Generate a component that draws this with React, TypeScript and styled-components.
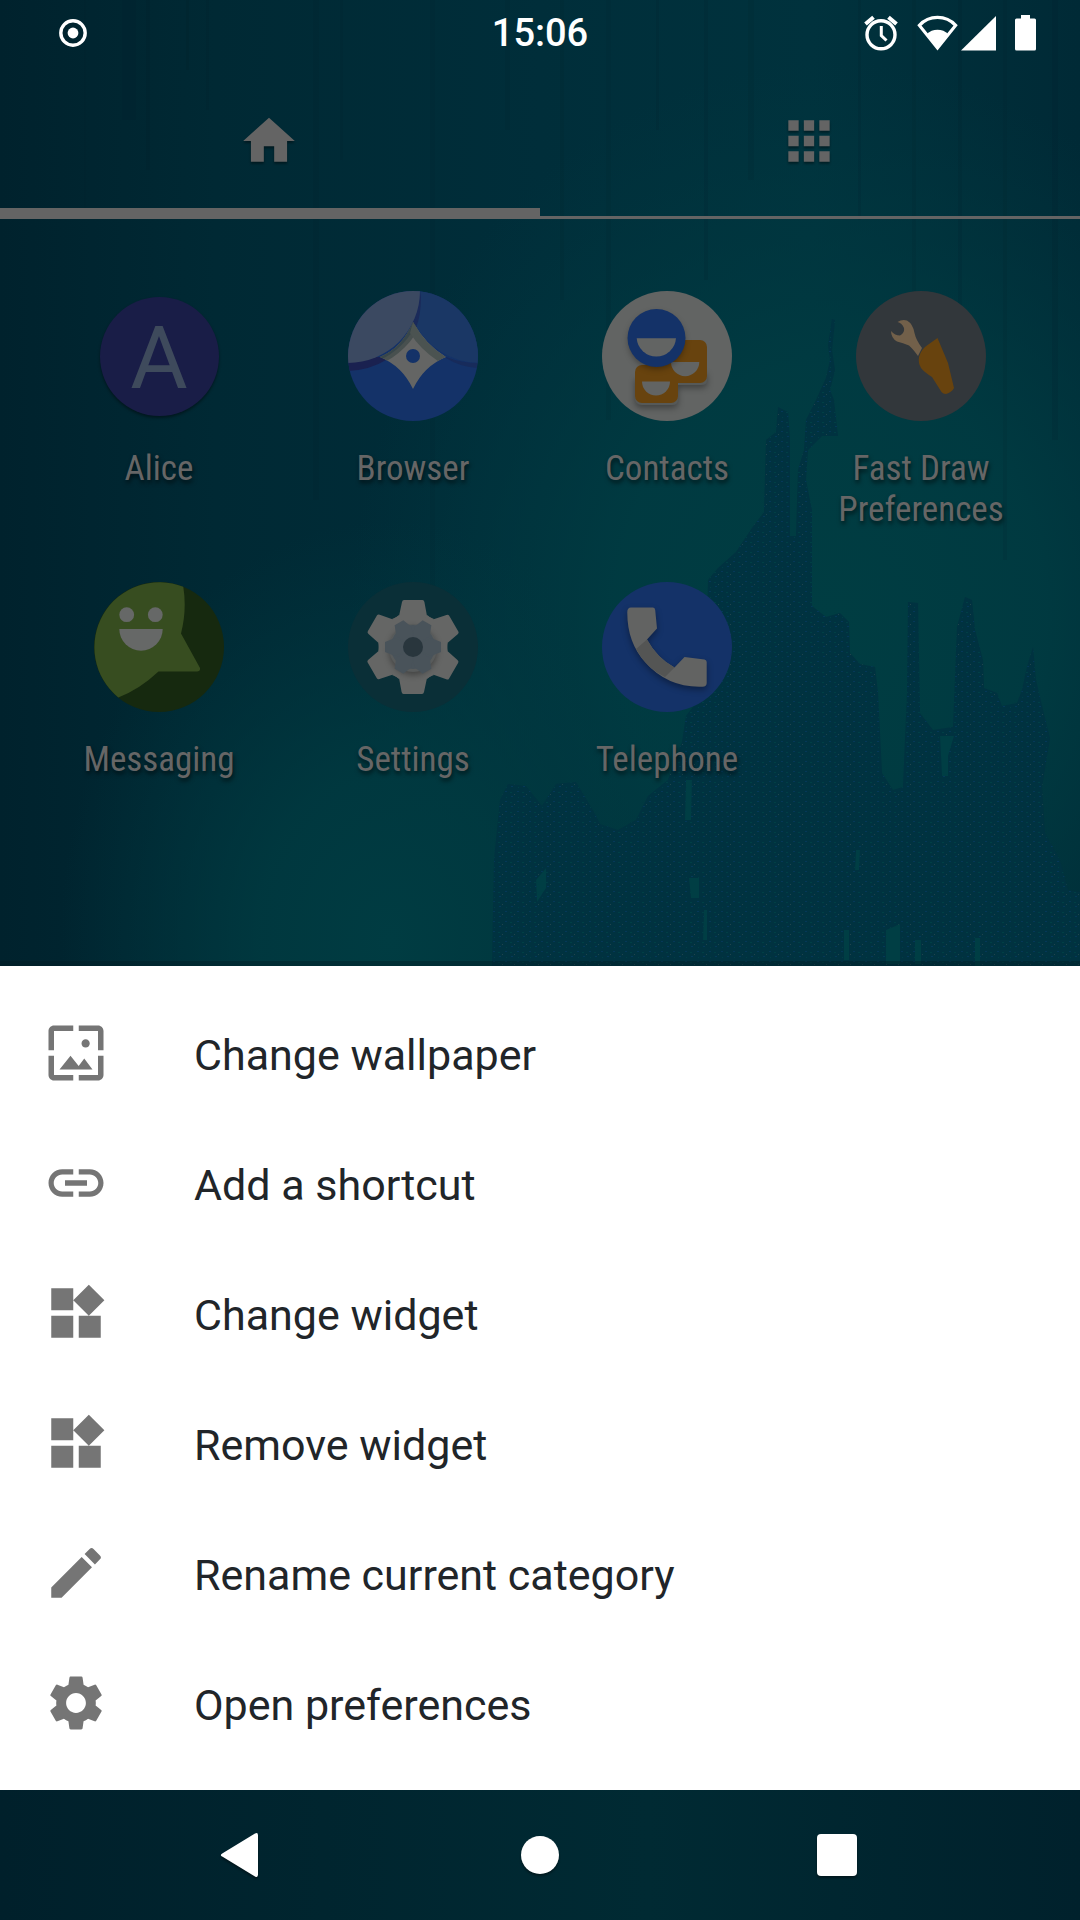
import type { ReactNode } from 'react';
import { styled, createGlobalStyle } from 'styled-components';
import {
  MdApps,
  MdEdit,
  MdHome,
  MdLink,
  MdSettings,
  MdWallpaper,
  MdWidgets,
} from 'react-icons/md';

const apps: { name: string; icon: ReactNode }[] = [
  { name: 'Alice', icon: <AliceIcon /> },
  { name: 'Browser', icon: <BrowserIcon /> },
  { name: 'Contacts', icon: <ContactsIcon /> },
  { name: 'Fast Draw Preferences', icon: <FastDrawIcon /> },
  { name: 'Messaging', icon: <MessagingIcon /> },
  { name: 'Settings', icon: <SettingsIcon /> },
  { name: 'Telephone', icon: <TelephoneIcon /> },
];

const actions = [
  { label: 'Change wallpaper', Icon: MdWallpaper },
  { label: 'Add a shortcut', Icon: MdLink },
  { label: 'Change widget', Icon: MdWidgets },
  { label: 'Remove widget', Icon: MdWidgets },
  { label: 'Rename current category', Icon: MdEdit },
  { label: 'Open preferences', Icon: MdSettings },
];

const App = () => {
  return (
    <>
      <GlobalStyle />
      <Screen>
        <Wallpaper />
        <StatusBar>
          <StatusGroup>
            <svg width='28' height='28' viewBox='0 0 28 28'>
              <circle cx='14' cy='14' r='12.2' fill='none' stroke='#fff' strokeWidth='3.4' />
              <circle cx='14' cy='14' r='5.4' fill='#fff' />
            </svg>
          </StatusGroup>
          <Clock>15:06</Clock>
          <StatusGroup $end>
            <AlarmGlyph />
            <StatusGlyphs />
          </StatusGroup>
        </StatusBar>
        <Tabs>
          <Tab $active aria-label='Home'>
            <MdHome size={62} />
          </Tab>
          <Tab aria-label='Applications'>
            <MdApps size={62} />
          </Tab>
        </Tabs>
        <AppGrid>
          {apps.map(({ name, icon }) => (
            <AppTile key={name}>
              {icon}
              <AppName>{name}</AppName>
            </AppTile>
          ))}
        </AppGrid>
        <Sheet>
          {actions.map(({ label, Icon }) => (
            <SheetItem key={label}>
              <Icon size={66} />
              <SheetLabel>{label}</SheetLabel>
            </SheetItem>
          ))}
        </Sheet>
        <NavBar>
          <NavButton aria-label='Back'>
            <svg width='46' height='46' viewBox='0 0 46 46'>
              <path d='M2.6 21.2L35 1.6Q38 0 38 3.4V42.6Q38 46 35 44.4L2.6 24.8Q-1 23 2.6 21.2Z' />
            </svg>
          </NavButton>
          <NavButton aria-label='Home screen'>
            <svg width='46' height='46' viewBox='0 0 46 46'>
              <circle cx='23' cy='23' r='19' />
            </svg>
          </NavButton>
          <NavButton aria-label='Overview'>
            <svg width='46' height='46' viewBox='0 0 46 46'>
              <rect x='3' y='2' width='40' height='42' rx='4' />
            </svg>
          </NavButton>
        </NavBar>
      </Screen>
    </>
  );
};

// faint vertical brush strokes: [x, width, height, opacity]
const strokes = [
  [84, 2, 210, 0.16], [122, 14, 120, 0.16], [146, 4, 170, 0.2], [186, 3, 70, 0.2],
  [206, 3, 110, 0.16], [313, 6, 500, 0.08], [340, 3, 160, 0.16], [430, 5, 700, 0.08],
  [505, 5, 130, 0.12], [560, 4, 300, 0.12], [606, 5, 420, 0.1], [656, 3, 130, 0.16],
  [704, 4, 280, 0.16], [748, 6, 180, 0.12], [858, 3, 220, 0.16], [912, 4, 400, 0.12],
  [958, 4, 330, 0.16], [1003, 4, 560, 0.12], [1052, 6, 440, 0.14],
];

function Wallpaper() {
  return (
    <WallpaperSvg viewBox='0 0 1080 1920' preserveAspectRatio='xMidYMid slice' aria-hidden='true'>
      <defs>
        <linearGradient id='sea' x1='0' x2='1'>
          <stop offset='0' stopColor='#00222d' />
          <stop offset='0.2' stopColor='#002934' />
          <stop offset='0.5' stopColor='#002e3a' />
          <stop offset='0.75' stopColor='#00323d' />
          <stop offset='1' stopColor='#002a36' />
        </linearGradient>
        <radialGradient id='glow' gradientUnits='userSpaceOnUse' cx='0' cy='0' r='1' gradientTransform='translate(830 620) scale(480 560)'>
          <stop offset='0' stopColor='#003d42' />
          <stop offset='0.45' stopColor='#003c42' stopOpacity='0.85' />
          <stop offset='1' stopColor='#003840' stopOpacity='0' />
        </radialGradient>
        <radialGradient id='glow-low' gradientUnits='userSpaceOnUse' cx='0' cy='0' r='1' gradientTransform='translate(390 940) scale(330 420)'>
          <stop offset='0' stopColor='#003c42' />
          <stop offset='0.4' stopColor='#003b41' stopOpacity='0.8' />
          <stop offset='1' stopColor='#003840' stopOpacity='0' />
        </radialGradient>
        <linearGradient id='deep' x1='0' x2='1'>
          <stop offset='0' stopColor='#00202b' />
          <stop offset='0.6' stopColor='#002a33' />
          <stop offset='1' stopColor='#00212c' />
        </linearGradient>
        <pattern id='grain' width='12' height='10' patternUnits='userSpaceOnUse'>
          <path d='M1 1h2v1h-2zM7 6h2v1h-2z' fill='#063a60' />
          <path d='M6 2h2v1h-2zM2 7h1v1h-1z' fill='#004347' />
          <path d='M10 4h1v1h-1z' fill='#2a4a50' />
        </pattern>
      </defs>
      <rect width='1080' height='1920' fill='url(#sea)' />
      <rect width='1080' height='1300' fill='url(#glow)' />
      <rect width='1080' height='1300' fill='url(#glow-low)' />
      {strokes.map(([x, width, height, opacity]) => (
        <rect key={x} x={x} width={width} height={height} fill='#001f29' opacity={opacity} />
      ))}
      <path d={castle} fill='#003240' />
      <path d={castle} fill='url(#grain)' opacity='0.75' />
      <path d={drips} fill='#003e44' />
      <rect y='961' width='1080' height='5' fill='#001c24' opacity='0.4' />
      <rect y='1780' width='1080' height='140' fill='url(#deep)' />
    </WallpaperSvg>
  );
}

const castle =
  'M492 966L494 860L500 800L508 784L526 786L542 806L556 784L576 782L594 812L600 824L618 830L636 820L648 796L668 780L682 742L686 716L706 690L708 580L718 568L736 552L752 528L764 512L766 440L776 432L778 407L788 412L790 440V536H796L798 470L804 450L806 420L816 400L826 378L830 360L828 345L832 319L835 320L832 350L835 370L830 390L834 400L838 436L822 436L808 450L806 480L812 510L812 606L826 617L840 613L849 622L850 653L860 664L875 667L878 693L882 773L893 790L903 787L907 693L908 602L918 603L920 713L933 730L953 727L957 627L965 597L972 600L975 630L983 660L984 688L997 693L1002 706L1017 703L1022 690L1027 667L1033 647L1036 680L1043 710L1050 738L1042 787L1045 833L1060 860L1068 890L1080 892V966Z';

const drips =
  'M686 780h6l-1 40h-6zM689 878h10v20h-8zM856 850h4l-1 20h-4zM844 930h5v30h-5zM886 930l14-6v40h-14zM704 910h3v30h-4zM915 940h6v24h-6zM975 938h5v28h-5zM940 736h14l-6 20v20h-6zM536 880l10-12v20l-9 14z';

function AlarmGlyph() {
  return (
    <svg width='36' height='36' viewBox='0 0 36 36' fill='none' stroke='currentColor'>
      <circle cx='18' cy='19.8' r='14' strokeWidth='3.4' />
      <path d='M2.5 9L10.5 2.2M33.500 9L25.500 2.200' strokeWidth='4' />
      <path d='M18.300 11V20.500L23.500 25.500' strokeWidth='3' />
    </svg>
  );
}

function StatusGlyphs() {
  return (
    <svg width='120' height='36' viewBox='0 0 120 36' fill='currentColor'>
      <path
        d='M3.4 10.400C13 -0.300 30 -0.300 39.600 10.400L21.500 33Z'
        fill='none'
        stroke='currentColor'
        strokeWidth='3.2'
      />
      <path d='M11 19C16 13.200 27 13.200 32 19L21.500 34Z' />
      <path d='M45 35.500L80 1V35.500Z' />
      <path d='M105 0h9v3.500h4.500q1.500 0 1.500 1.500V34q0 1.500-1.500 1.500H100.500Q99 35.500 99 34V5q0-1.500 1.500-1.500H105z' />
    </svg>
  );
}

function AliceIcon() {
  return (
    <AppSlot>
      <Initial>A</Initial>
    </AppSlot>
  );
}

function BrowserIcon() {
  return (
    <AppIcon viewBox='0 0 130 130'>
      <defs>
        <clipPath id='browser-disc'>
          <circle cx='65' cy='65' r='65' />
        </clipPath>
        <clipPath id='browser-star'>
          <path d='M65 31Q78 54 98 66Q76 75 65 98Q54 75 32 66Q54 57 65 31Z' />
        </clipPath>
      </defs>
      <g clipPath='url(#browser-disc)'>
        <rect width='130' height='130' fill='#143268' />
        <path d='M65 0H130V72Q88 70 65 31Z' fill='#1a3765' />
        <path d='M0 66H38V69Q22 79 0 80Z' fill='#1a2150' />
        <path d='M72 0L73 6Q73 24 68 37L64 32Z' fill='#1a2a5a' />
        <path d='M98 66Q114 72 130 72V77Q112 76 98 67Z' fill='#172b5b' />
        <g clipPath='url(#browser-star)'>
          <rect width='130' height='130' fill='#646564' />
          <circle cx='0' cy='0' r='80' fill='#48504f' />
          <circle cx='0' cy='0' r='76' fill='#38464a' />
          <path d='M65 31Q78 54 98 66L90 70Q72 58 62 42Z' fill='#4b5351' />
        </g>
        <circle r='72' fill='#3b4961' />
        <circle cx='65' cy='65' r='7' fill='#143268' />
      </g>
    </AppIcon>
  );
}

function ContactsIcon() {
  return (
    <AppIcon viewBox='0 0 130 130'>
      <circle cx='65' cy='65' r='65' fill='#626463' />
      <SoftShadow>
        <path d='M62 80h43v10q0 4-6 4H76v15q0 5-6 5H40q-7 0-7-7V86z' />
      </SoftShadow>
      <rect x='62' y='49' width='43' height='43' rx='7' fill='#68430e' />
      <rect x='33' y='74' width='43' height='38' rx='7' fill='#68430e' />
      <path d='M69 71H97.300A14.100 14.100 0 0 1 69 71Z' fill='#626463' />
      <path d='M40 90.500H68A14 14 0 0 1 40 90.500Z' fill='#626463' />
      <SoftShadow>
        <circle cx='54.500' cy='47' r='28' fill='#143268' />
      </SoftShadow>
      <circle cx='54.500' cy='47' r='29' fill='#143268' />
      <path d='M34.700 47.300H74A19.700 19.700 0 0 1 34.700 47.300Z' fill='#626463' />
    </AppIcon>
  );
}

function FastDrawIcon() {
  return (
    <AppIcon viewBox='0 0 130 130'>
      <circle cx='65' cy='65' r='65' fill='#32373b' />
      <path
        d='M41.500 31Q46 28 51 29.500Q57 33 58.500 42Q60 49 66 57L62 65Q57 58 53 54.500Q47 52 41 50.500Q35 47 35 40Q39 44.500 44 44.500Q49 42 48 37Q46 32 41.500 31Z'
        fill='#72604a'
      />
      <path
        d='M81.500 47L92 72L98 97Q96 101 90 103Q87 103 85.500 101L76 86Q68 81 65 77Q62 72 63 66Q65 58 73 53Z'
        fill='#68430e'
      />
    </AppIcon>
  );
}

function MessagingIcon() {
  return (
    <AppIcon viewBox='0 0 130 130'>
      <circle cx='65' cy='65' r='65' fill='#16290f' />
      <path
        d='M89.300 4.700Q93 28 87 51.500L106 86Q106.500 89.500 103 89.500H64.500Q46 107 24.300 115.500A65 65 0 0 1 89.300 4.700Z'
        fill='#374d20'
      />
      <g fill='#666867'>
        <circle cx='32.700' cy='32.700' r='7.400' />
        <circle cx='61.300' cy='32.700' r='7.400' />
        <path d='M25.300 47H68.700A21.700 21.700 0 0 1 25.300 47Z' />
      </g>
    </AppIcon>
  );
}

function SettingsIcon() {
  const turns = [0, 60, 120, 180, 240, 300];
  return (
    <AppIcon viewBox='0 0 130 130'>
      <circle cx='65' cy='65' r='65' fill='#0a2f37' />
      <g fill='#656665'>
        <circle cx='65' cy='65' r='34' />
        {turns.map((turn) => (
          <path
            key={turn}
            d='M56 18H74.500Q76 18 76.400 20L79 34L86 37L65 65L44 37L51 34L54 20Q54.400 18 56 18Z'
            transform={`rotate(${turn} 65 65)`}
          />
        ))}
      </g>
      <SoftShadow>
        <circle cx='65' cy='66' r='24' fill='#585b5b' />
      </SoftShadow>
      <g fill='#49535a'>
        <circle cx='65' cy='65' r='22' />
        {turns.map((turn) => (
          <path
            key={turn}
            d='M60 37H70L74 47L65 65L56 47Z'
            transform={`rotate(${turn + 30} 65 65)`}
          />
        ))}
      </g>
      <circle cx='65' cy='65' r='10' fill='#29363d' />
    </AppIcon>
  );
}

function TelephoneIcon() {
  return (
    <AppIcon viewBox='0 0 130 130'>
      <circle cx='65' cy='65' r='65' fill='#143268' />
      <SoftShadow>
        <path
          d='M29 25.500H51Q53 25.500 53.200 28L55 46.500L45 57.500Q55 76 72.500 85.500L82.500 75L102.500 77.500Q104.700 78 104.700 80V101Q104.700 104.700 100.500 104.700Q66 106 43 80Q25 60 25.300 30Q25.300 25.500 29 25.500Z'
          fill='#626362'
        />
      </SoftShadow>
      <path d='M45 57.500Q55 76 72.500 85.500L63 95Q44 86 34 67Z' fill='#545554' />
    </AppIcon>
  );
}

const GlobalStyle = createGlobalStyle`
  *, *::before, *::after {
    box-sizing: border-box;
  }
  body {
    margin: 0;
    background-color: #00232e;
    font-family: Roboto, 'Liberation Sans', sans-serif;
  }
  button {
    border: none;
    background: none;
    font: inherit;
    cursor: pointer;
  }
  svg {
    display: block;
    flex-shrink: 0;
  }
`;

const Screen = styled.main`
  position: relative;
  display: flex;
  flex-direction: column;
  min-height: 100vh;
  isolation: isolate;
  overflow: hidden;
`;

const WallpaperSvg = styled.svg`
  position: absolute;
  inset: 0;
  z-index: -1;
  width: 100%;
  height: 100%;
`;

const StatusBar = styled.header`
  display: grid;
  grid-template-columns: 1fr auto 1fr;
  align-items: center;
  height: 66px;
  padding: 0 44px 0 59px;
  color: #fff;
`;

const StatusGroup = styled.div<{ $end?: boolean }>`
  display: flex;
  align-items: center;
  gap: 17px;
  justify-content: ${(props) => (props.$end ? 'flex-end' : 'flex-start')};
`;

const Clock = styled.time`
  padding-left: 15px;
  margin-right: 30px;
  font-size: 38px;
  font-weight: 500;
  line-height: 48px;
`;

const Tabs = styled.nav`
  display: flex;
`;

const Tab = styled.button<{ $active?: boolean }>`
  flex: 1;
  display: flex;
  align-items: center;
  justify-content: center;
  height: 153px;
  padding: 0 2px 4px 0;
  color: #646464;
  box-shadow: inset 0 ${(props) => (props.$active ? '-11px' : '-3px')} 0 #646464;
  svg {
    filter: drop-shadow(0 2px 1px rgba(0, 0, 0, 0.4));
  }
`;

const AppGrid = styled.section`
  flex: 1;
  display: grid;
  grid-template-columns: repeat(4, 1fr);
  align-content: start;
  row-gap: 52px;
  padding: 72px 32px 0;
`;

const AppTile = styled.button`
  display: flex;
  flex-direction: column;
  align-items: center;
  justify-content: flex-start;
  gap: 27px;
  padding: 0;
`;

const AppIcon = styled.svg`
  width: 130px;
  height: 130px;
`;

const SoftShadow = styled.g`
  fill: #565958;
  filter: drop-shadow(0 3px 3px rgba(0, 0, 0, 0.35));
`;

const AppSlot = styled.span`
  display: flex;
  align-items: center;
  justify-content: center;
  width: 130px;
  height: 130px;
`;

const Initial = styled.span`
  width: 119px;
  height: 119px;
  border-radius: 50%;
  background-color: #191d47;
  box-shadow: 0 2px 3px rgba(0, 0, 0, 0.4);
  color: #3e4a5c;
  font-size: 88px;
  line-height: 121px;
  text-align: center;
`;

const AppName = styled.span`
  width: 200px;
  color: #666;
  font-family: 'Roboto Condensed', Roboto, sans-serif;
  font-size: 35px;
  line-height: 41px;
  text-align: center;
  text-shadow: 1px 3px 4px rgba(0, 0, 0, 0.6);
`;

const Sheet = styled.section`
  display: flex;
  flex-direction: column;
  padding: 22px 0;
  background-color: #fff;
`;

const SheetItem = styled.button`
  display: flex;
  align-items: center;
  gap: 85px;
  height: 130px;
  padding: 0 43px;
  color: #757575;
  text-align: left;
`;

const SheetLabel = styled.span`
  padding-top: 4px;
  color: #212529;
  font-size: 43px;
  line-height: 50px;
`;

const NavBar = styled.footer`
  display: flex;
  height: 130px;
  padding: 0 94px;
`;

const NavButton = styled.button`
  flex: 1;
  display: flex;
  align-items: center;
  justify-content: center;
  padding: 0;
  svg {
    fill: #fff;
    filter: drop-shadow(0 2px 1px rgba(0, 0, 0, 0.4));
  }
`;

export default App;
